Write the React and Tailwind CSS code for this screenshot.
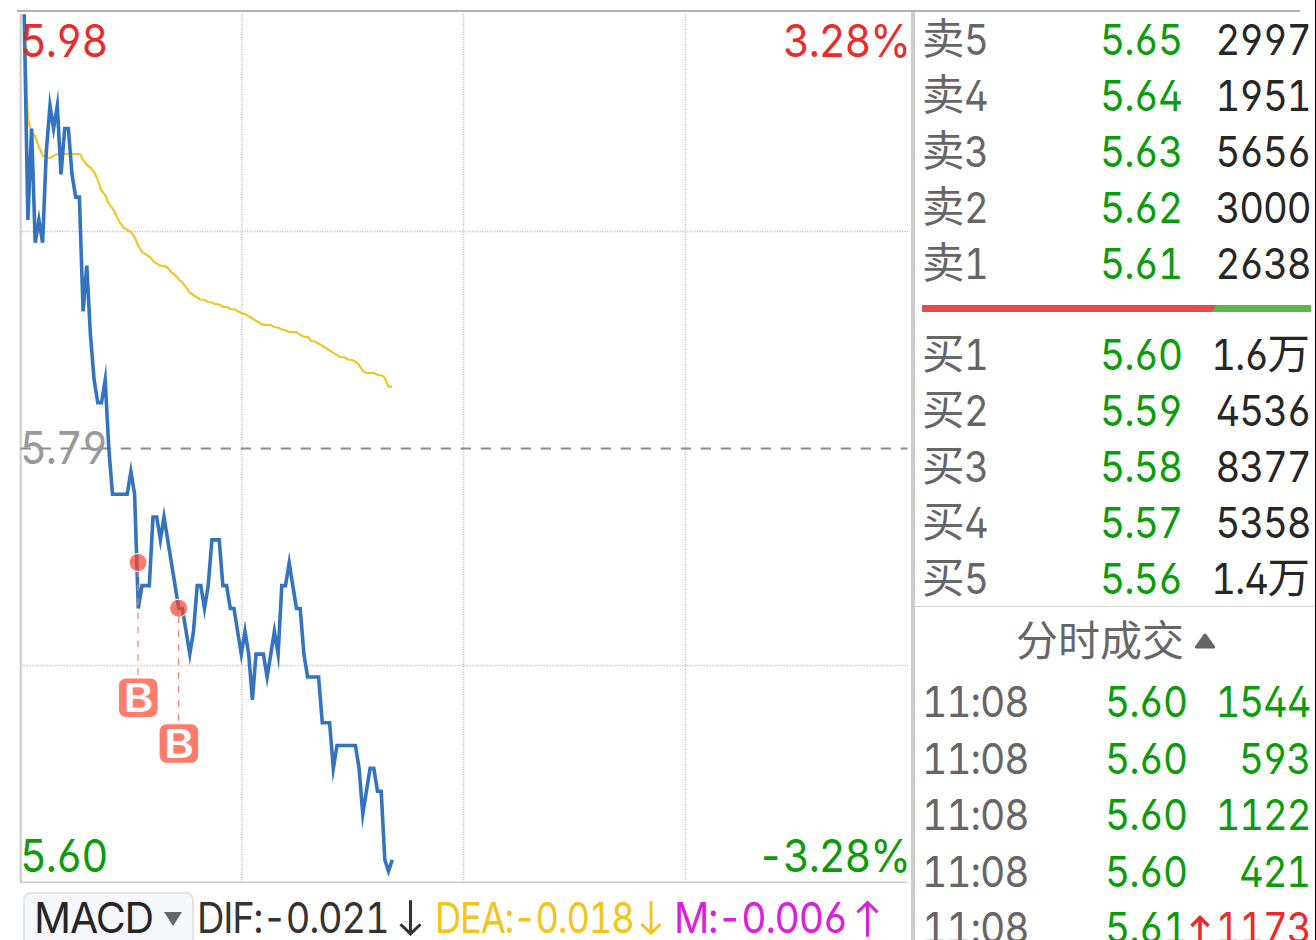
import clsx from 'clsx'

const SELLS = [
  { label: '卖', level: 5, price: '5.65', volume: '2997' },
  { label: '卖', level: 4, price: '5.64', volume: '1951' },
  { label: '卖', level: 3, price: '5.63', volume: '5656' },
  { label: '卖', level: 2, price: '5.62', volume: '3000' },
  { label: '卖', level: 1, price: '5.61', volume: '2638' },
]

const BUYS = [
  { label: '买', level: 1, price: '5.60', volume: '1.6', unit: '万' },
  { label: '买', level: 2, price: '5.59', volume: '4536' },
  { label: '买', level: 3, price: '5.58', volume: '8377' },
  { label: '买', level: 4, price: '5.57', volume: '5358' },
  { label: '买', level: 5, price: '5.56', volume: '1.4', unit: '万' },
]

const TRADES = [
  { time: '11:08', price: '5.60', volume: '1544' },
  { time: '11:08', price: '5.60', volume: '593' },
  { time: '11:08', price: '5.60', volume: '1122' },
  { time: '11:08', price: '5.60', volume: '421' },
  { time: '11:08', price: '5.61', volume: '1173', up: true },
]

// One value per minute, in cents below the previous close (5.79)
const TICKS = [
  -19, -10, -14, -9, -10, -9, -13, -15, -14, -15, -12, -14, -14, -12, -11, -11, -6, -8, -5, -3,
  -2, -2, -3, 0, 2, 2, 2, 2, 2, 1, 2, 7, 6, 6, 6, 3, 3, 4, 3, 4,
  5, 6, 7, 7, 8, 9, 8, 6, 6, 7, 6, 4, 4, 4, 6, 6, 7, 7, 8, 9,
  8, 9, 11, 9, 9, 9, 10, 9, 8, 9, 6, 6, 5, 6, 7, 7, 9, 10, 10, 10,
  10, 12, 12, 12, 14, 13, 13, 13, 13, 13, 13, 14, 16, 15, 14, 14, 15, 15, 18, 18.5, 18,
]

const PRICE_LINE = TICKS.map((t, i) => `${(24.2 + i * 3.68).toFixed(1)},${(448.5 + t * 22.85).toFixed(1)}`).join(' ')

const AVG_LINE =
  '24,15 28,120 31.5,132 35,136 39,147 43,156 50,158 57,154 80,154 83,160 87,165 91,168 94,172 97,178 101,190 105,195 109,204 113,209 117,217 120,223 124,228 131,232 135,238 138,245 142,252 150,257 154,262 160,265.5 165,266 168,268 171,272 175,275 179,279.5 182,282 186,287 190,293 200,299.5 205,300 208,302 212,302.5 215,304 219,304.5 223,307 227,307 230,309 235,309.5 241,313 245,314 250,317 263,325 271,325 274,327 278,327.5 282,329.5 285,330 289,332 296,332 303,336.5 308,337 311,341 315,341.5 321,345 340,357 345,357.5 348,359.5 352,360 356,362 359,365 363,371 366,373 374,373 378,375 382,375.5 385,378 388,386 392,387'

const MARKERS = [
  { x: 138, y: 562.5, box: 678.5 },
  { x: 178.6, y: 608.2, box: 724.3 },
]

// Condensed numerals, anchored left or right
function Num({ children, right, className, fit = 'scale-x-90 tracking-[-1.2px]' }) {
  return (
    <span
      className={clsx('inline-block whitespace-nowrap', fit, right ? 'origin-right' : 'origin-left', className)}
    >
      {children}
    </span>
  )
}

function Arrow({ up, className }) {
  return (
    <svg viewBox="0 0 24 38" fill="none" stroke="currentColor" strokeWidth="3.2" className={className}>
      <path d={up ? 'M12 38V2.5M1.5 12.5L12 2.5L22.5 12.5' : 'M12 0V35M1.5 25L12 35L22.5 25'} />
    </svg>
  )
}

function Chart() {
  return (
    <div className="relative h-[871px]">
      <svg viewBox="0 12 911 871" width="911" height="871" fill="none" className="block">
        <g stroke="#c4c4c4" strokeWidth="1.5" strokeDasharray="1.2 1.3">
          <path d="M242 14V881M463.5 14V881M685.5 14V881" />
          <path d="M22 231.5H908M22 665.5H908" />
        </g>
        <path d="M20.7 14V882.4H907.5" stroke="#cbcbcb" strokeWidth="2" />
        <path d="M20.7 448.5H907.5" stroke="#8c8c8c" strokeWidth="1.8" strokeDasharray="10.3 9.7" />
        <polyline points={AVG_LINE} stroke="#f0c626" strokeWidth="2.2" />
        <polyline points={PRICE_LINE} stroke="#3474bf" strokeWidth="3.6" strokeMiterlimit="9.7" />
        {MARKERS.map(m => (
          <g key={m.x}>
            <path d={`M${m.x} ${m.y + 8}V${m.box}`} stroke="#f08078" strokeWidth="1.2" strokeDasharray="6.5 7.5" />
            <circle cx={m.x} cy={m.y} r="9" fill="#fa4632" fillOpacity="0.72" stroke="#fff" strokeWidth="1" />
            <rect x={m.x - 19} y={m.box} width="38.5" height="38.5" rx="7" fill="#ff7c6c" />
            <text
              x={m.x - 14.6}
              y={m.box + 33.5}
              fill="#fff"
              fontFamily="Inter, sans-serif"
              fontWeight="600"
              fontSize="39"
              textLength="30"
              lengthAdjust="spacingAndGlyphs"
            >
              B
            </text>
          </g>
        ))}
      </svg>
      <div className="pointer-events-none absolute inset-0 text-[45px] leading-[56px]">
        <Num fit="scale-x-[0.92] tracking-[-1.2px]" className="absolute top-[1px] left-[20px] text-[#e92b2b]">5.98</Num>
        <Num right fit="scale-x-[0.92] tracking-[-1.2px]" className="absolute top-[1px] right-px text-[#e92b2b]">3.28%</Num>
        <Num fit="scale-x-[0.92] tracking-[-1.2px]" className="absolute top-[408px] left-[20px] text-[#999]">5.79</Num>
        <Num fit="scale-x-[0.92] tracking-[-1.2px]" className="absolute top-[816px] left-[20px] text-[#0a9c0a]">5.60</Num>
        <Num right fit="scale-x-[0.92] tracking-[-1.2px]" className="absolute top-[816px] right-px text-[#0a9c0a]">-3.28%</Num>
      </div>
    </div>
  )
}

function Indicators() {
  return (
    <div className="flex h-[57px] pt-[9px] pl-[23px] leading-[48px]">
      <button className="flex h-12 w-[171px] shrink-0 items-start rounded-t-lg border-2 border-b-0 border-[#e3e4e8] bg-[#f6f7fa] pl-[9px] text-[#262626]">
        <span className="w-[129px] text-left">
          <Num fit="scale-x-[0.965] tracking-[-1.2px]">MACD</Num>
        </span>
        <svg viewBox="0 0 18 14" className="mt-[18px] ml-px h-[14px] w-[18px] shrink-0" fill="#666">
          <path d="M0 0H18L9 14Z" />
        </svg>
      </button>
      <div className="flex w-[244px] shrink-0 pt-[2px] pl-[3px] text-[#333]">
        <span className="w-[202px]">
          <Num fit="scale-x-[0.895] tracking-[-1.4px]">DIF:-0.021</Num>
        </span>
        <Arrow className="mt-[6px] h-[37px] w-[23px]" />
      </div>
      <div className="flex w-[238px] shrink-0 pt-[2px] text-[#f2c41c]">
        <span className="w-[202px]">
          <Num fit="scale-x-[0.855] tracking-[-1.4px]" className="-ml-[3px]">DEA:-0.018</Num>
        </span>
        <Arrow className="mt-[6px] h-[37px] w-[22px]" />
      </div>
      <div className="flex shrink-0 pt-[2px] text-[#d921dd]">
        <span className="w-[180px]">
          <Num fit="scale-x-[0.92] tracking-[-1.4px]" className="-ml-[2px]">M:-0.006</Num>
        </span>
        <Arrow up className="mt-[6px] h-[37px] w-[23px]" />
      </div>
    </div>
  )
}

function DepthRow({ row }) {
  return (
    <div className="flex h-14 items-center pl-[7px] pr-[5px] leading-[56px]">
      <span className="flex w-[114px] text-[#666]">
        <span>{row.label}</span>
        <Num className="-ml-px pt-px">{row.level}</Num>
      </span>
      <span className="w-[146px] pt-px text-right text-[#0a9c0a]">
        <Num right fit="scale-x-[0.91] tracking-[-1px]">{row.price}</Num>
      </span>
      <span className="flex flex-1 justify-end text-[#262626]">
        <Num right className="pt-px">{row.volume}</Num>
        {row.unit && <span>{row.unit}</span>}
      </span>
    </div>
  )
}

function TradeRow({ trade }) {
  return (
    <div className="flex h-[56.5px] shrink-0 items-center pt-[2px] pl-[7px] pr-[5px] leading-[54px]">
      <span className="w-[130px] text-[#666]">
        <Num fit="scale-x-[0.92] tracking-[-1.2px]">{trade.time}</Num>
      </span>
      <span className="w-[135px] text-right text-[#0a9c0a]">
        <Num right fit="scale-x-[0.91] tracking-[-1px]">{trade.price}</Num>
      </span>
      <span className={clsx('relative flex-1 text-right', trade.up ? 'text-[#e92b2b]' : 'text-[#0a9c0a]')}>
        {trade.up && (
          <svg
            viewBox="0 0 20 26"
            fill="none"
            stroke="currentColor"
            strokeWidth="3.6"
            className="absolute top-[14px] left-[3px] h-[26px] w-[20px]"
          >
            <path d="M10 26V3M1.5 11L10 2.5L18.5 11" />
          </svg>
        )}
        <Num right>{trade.volume}</Num>
      </span>
    </div>
  )
}

export default function App() {
  return (
    <div className="flex h-[940px] w-[1316px] flex-col overflow-hidden border-r border-black bg-white pt-[10px] font-['Inter','Noto_Sans_CJK_SC',sans-serif] text-[42.5px] [font-feature-settings:'tnum','cv02','cv03','cv04']">
      <div className="ml-[17px] h-[2px] w-[1283px] shrink-0 bg-[#b3b3b3]" />
      <div className="flex h-[928px]">
        <main className="w-[911px] shrink-0">
          <Chart />
          <Indicators />
        </main>
        <aside className="flex flex-1 flex-col border-l-4 border-[#ccc]">
          <div className="-mt-px">
            {SELLS.map(row => <DepthRow key={row.level} row={row} />)}
          </div>
          <div className="mt-[14px] mr-1 ml-[7px] h-[7px] shrink-0 bg-[#5db947]">
            <div className="h-full w-[295px] bg-[#e64949] [clip-path:polygon(0_0,100%_0,289px_100%,0_100%)]" />
          </div>
          <div className="mt-[14px] border-b border-[#d4d4d4]">
            {BUYS.map(row => <DepthRow key={row.level} row={row} />)}
          </div>
          <div className="flex h-[66px] shrink-0 items-center pl-[101px] text-[#666]">
            <span className="text-[42px]">分时成交</span>
            <svg viewBox="0 0 22 16" className="mt-[2px] ml-[10px] h-4 w-[22px]" fill="#666">
              <path d="M9.8 1Q11 0 12.2 1L21 13.5Q21.6 15.6 20 15.6H2Q.4 15.6 1 13.5Z" />
            </svg>
          </div>
          {TRADES.map((trade, i) => <TradeRow key={i} trade={trade} />)}
        </aside>
      </div>
    </div>
  )
}
